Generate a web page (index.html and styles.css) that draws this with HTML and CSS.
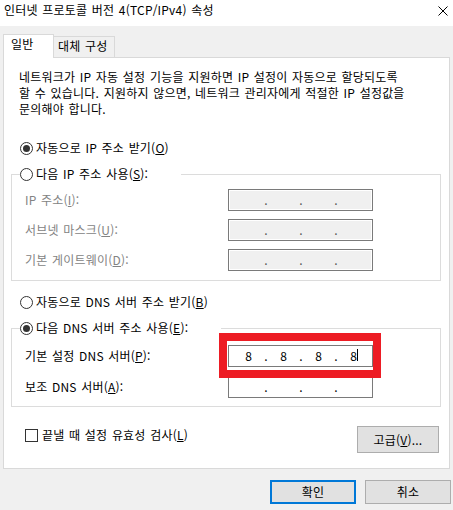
FILE: index.html
```html
<!DOCTYPE html>
<html lang="ko">
<head>
<meta charset="utf-8">
<title>인터넷 프로토콜 버전 4(TCP/IPv4) 속성</title>
<link rel="stylesheet" href="styles.css">
</head>
<body>
<div class="window">
  <div class="titlebar">
    <span class="title">인터넷 프로토콜 버전 4(TCP/IPv4) 속성</span>
    <svg class="close" width="10" height="10" viewBox="0 0 10 10"><path d="M0.5 0.5 L9.5 9.5 M9.5 0.5 L0.5 9.5" stroke="#000" stroke-width="1" fill="none"/></svg>
  </div>
  <div class="tabs">
    <div class="tab active">일반</div>
    <div class="tab">대체 구성</div>
  </div>
  <div class="panel">
    <p class="desc">네트워크가 IP 자동 설정 기능을 지원하면 IP 설정이 자동으로 할당되도록<br>할 수 있습니다. 지원하지 않으면, 네트워크 관리자에게 적절한 IP 설정값을<br>문의해야 합니다.</p>

    <div class="radio-row r-ip"><span class="radio checked"></span><span>자동으로 IP 주소 받기(<u>O</u>)</span></div>

    <fieldset class="group g-ip">
      <legend><span class="radio"></span><span>다음 IP 주소 사용(<u>S</u>):</span></legend>
      <div class="field disabled"><span class="lbl">IP 주소(<u>I</u>):</span><div class="ipbox"><span class="oct"></span><span class="dot">.</span><span class="oct"></span><span class="dot">.</span><span class="oct"></span><span class="dot">.</span><span class="oct"></span></div></div>
      <div class="field disabled"><span class="lbl">서브넷 마스크(<u>U</u>):</span><div class="ipbox"><span class="oct"></span><span class="dot">.</span><span class="oct"></span><span class="dot">.</span><span class="oct"></span><span class="dot">.</span><span class="oct"></span></div></div>
      <div class="field disabled"><span class="lbl">기본 게이트웨이(<u>D</u>):</span><div class="ipbox"><span class="oct"></span><span class="dot">.</span><span class="oct"></span><span class="dot">.</span><span class="oct"></span><span class="dot">.</span><span class="oct"></span></div></div>
    </fieldset>

    <div class="radio-row r-dns"><span class="radio"></span><span>자동으로 DNS 서버 주소 받기(<u>B</u>)</span></div>

    <fieldset class="group g-dns">
      <legend><span class="radio checked"></span><span>다음 DNS 서버 주소 사용(<u>E</u>):</span></legend>
      <div class="field"><span class="lbl">기본 설정 DNS 서버(<u>P</u>):</span><div class="ipbox"><span class="oct">8</span><span class="dot">.</span><span class="oct">8</span><span class="dot">.</span><span class="oct">8</span><span class="dot">.</span><span class="oct"><span class="caret">8</span></span></div></div>
      <div class="field f2"><span class="lbl">보조 DNS 서버(<u>A</u>):</span><div class="ipbox"><span class="oct"></span><span class="dot">.</span><span class="oct"></span><span class="dot">.</span><span class="oct"></span><span class="dot">.</span><span class="oct"></span></div></div>
    </fieldset>

    <div class="check-row">
      <label class="check"><span class="box"></span><span>끝낼 때 설정 유효성 검사(<u>L</u>)</span></label>
      <button class="btn adv">고급(<u>V</u>)...</button>
    </div>
  </div>
  <div class="buttons">
    <button class="btn ok">확인</button>
    <button class="btn">취소</button>
  </div>
  <div class="highlight"></div>
</div>
</body>
</html>
```

FILE: styles.css
```css
* { box-sizing: border-box; }
html, body { margin: 0; padding: 0; }
body {
  background: #f0f0f0;
  font-family: "Noto Sans CJK KR", "Malgun Gothic", sans-serif;
  font-size: 12px;
  line-height: 16px;
  letter-spacing: 0.2px;
  word-spacing: 1px;
  color: #000;
  width: 453px;
  height: 510px;
  overflow: hidden;
}
.window { position: relative; width: 453px; height: 510px; }

.titlebar {
  height: 26px;
  background: #fff;
  display: flex;
  justify-content: space-between;
  align-items: flex-start;
  padding: 2px 5px 0 4px;
}
.close { margin-top: 4px; display: block; }

.tabs {
  height: 31px;
  display: flex;
  align-items: flex-end;
  padding-left: 3px;
}
.tab {
  height: 21px;
  width: 61px;
  border: 1px solid #d9d9d9;
  border-left: none;
  border-bottom: none;
  padding: 1px 0 0 4px;
  background: #f0f0f0;
  white-space: nowrap;
}
.tab.active {
  position: relative;
  z-index: 1;
  height: 24px;
  width: 51px;
  margin-bottom: -1px;
  border-left: 1px solid #d9d9d9;
  background: #fff;
  padding-left: 7px;
}

.panel {
  margin: 0 3px;
  background: #fff;
  border: 1px solid #d9d9d9;
  padding: 11px 0 15px 0;
}
.desc {
  margin: 0;
  padding-left: 15px;
  white-space: nowrap;
}

.radio-row {
  display: flex;
  align-items: center;
  height: 16px;
  padding-left: 16px;
  white-space: nowrap;
}
.r-ip { margin-top: 23px; }
.r-dns { margin-top: 13px; }

.radio {
  width: 13px;
  height: 13px;
  border: 1px solid #333;
  border-radius: 50%;
  background: #fff;
  margin: 1px 3px 0 0;
  display: flex;
  align-items: center;
  justify-content: center;
  flex: none;
}
.radio.checked::after {
  content: "";
  width: 7px;
  height: 7px;
  border-radius: 50%;
  background: #333;
}

.group {
  margin: 10px 8px 0 7px;
  border: 1px solid #dcdcdc;
  padding: 0 0 9px 13px;
  min-width: 0;
}
.group legend {
  display: flex;
  align-items: center;
  height: 16px;
  margin-left: -5px;
  padding: 0 33px 0 0;
  white-space: nowrap;
}
.g-ip .field:first-of-type { margin-top: 7px; }
.g-dns { padding-bottom: 8px; }
.g-dns .field:first-of-type { margin-top: 9px; }

.field {
  display: grid;
  grid-template-columns: 203px 145px;
  align-items: center;
  margin-top: 8px;
  white-space: nowrap;
}
.g-ip .field { margin-top: 8px; }
.g-dns .f2 { margin-top: 9px; }
.field.disabled .lbl { color: #838383; }

.ipbox {
  height: 22px;
  border: 1px solid #7a7a7a;
  background: #fff;
  display: flex;
  align-items: center;
  padding-left: 7px;
  letter-spacing: 0;
}
.disabled .ipbox {
  background: #f0f0f0;
  box-shadow: inset 0 0 0 1px #fff;
}
.disabled .dot { color: #555; }
.oct { width: 25px; text-align: center; height: 16px; }
.dot { width: 10px; text-align: center; height: 16px; }
.caret { position: relative; }
.caret::after {
  content: "";
  position: absolute;
  left: 100%;
  top: 2px;
  width: 1px;
  height: 12px;
  background: #000;
}

.check-row {
  display: flex;
  justify-content: space-between;
  align-items: flex-start;
  margin: 19px 10px 0 21px;
}
.check {
  display: flex;
  align-items: center;
  margin-top: 1px;
  white-space: nowrap;
}
.box {
  width: 13px;
  height: 13px;
  border: 1px solid #333;
  background: #fff;
  margin: 1px 4px 0 0;
  flex: none;
}

.btn {
  font: inherit;
  line-height: 16px;
  letter-spacing: 0.2px;
  color: #000;
  background: #e1e1e1;
  border: 1px solid #adadad;
  padding: 0;
  margin: 0;
  border-radius: 0;
}
.adv { width: 82px; height: 27px; }

.buttons {
  display: flex;
  justify-content: flex-end;
  gap: 9px;
  padding-right: 2px;
  margin-top: 11px;
}
.buttons .btn { width: 86px; height: 24px; }
.buttons .ok { border: 2px solid #0078d7; }

.highlight {
  position: absolute;
  left: 219px;
  top: 333px;
  width: 162px;
  height: 45px;
  border: 8px solid #ed1c24;
}
```
